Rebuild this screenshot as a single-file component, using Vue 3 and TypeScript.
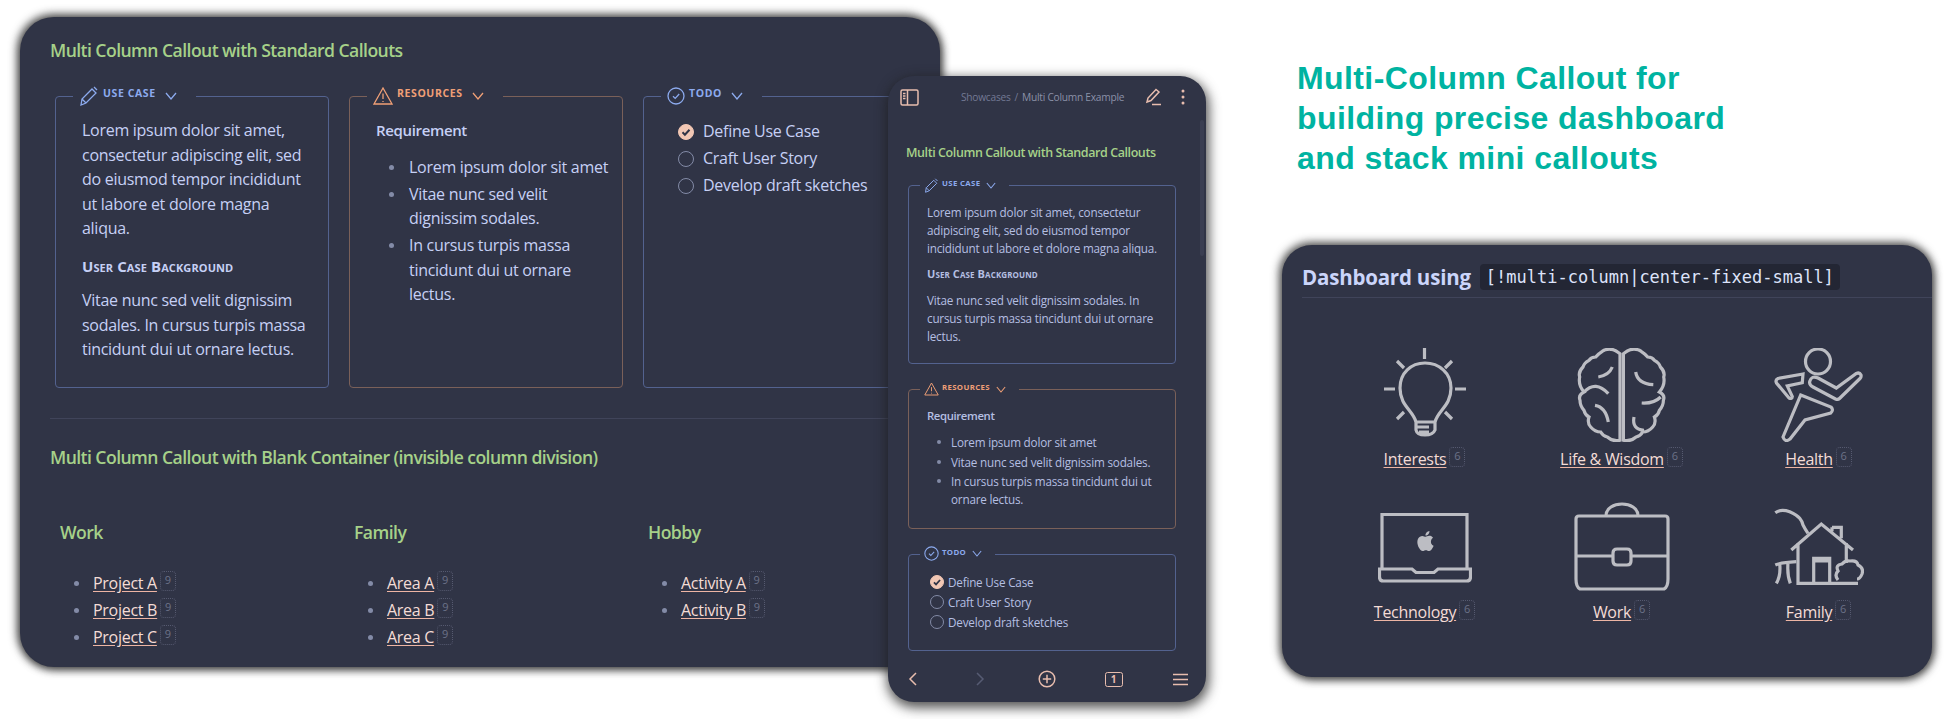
<script setup lang="ts">
interface Tile { label: string; icon: string }
const columns = [
  { name: 'Work', items: ['Project A', 'Project B', 'Project C'] },
  { name: 'Family', items: ['Area A', 'Area B', 'Area C'] },
  { name: 'Hobby', items: ['Activity A', 'Activity B'] },
]
const todos = [
  { text: 'Define Use Case', done: true },
  { text: 'Craft User Story', done: false },
  { text: 'Develop draft sketches', done: false },
]
const tiles: Tile[] = [
  { label: 'Interests', icon: 'bulb' },
  { label: 'Life & Wisdom', icon: 'brain' },
  { label: 'Health', icon: 'run' },
  { label: 'Technology', icon: 'laptop' },
  { label: 'Work', icon: 'case' },
  { label: 'Family', icon: 'house' },
]
</script>

<template>
  <div class="canvas">
    <section class="window main">
      <h2 class="green-title">Multi Column Callout with Standard Callouts</h2>
      <div class="callouts">
        <div class="callout blue">
          <div class="c-title">
            <svg class="ic" width="20" height="20" viewBox="0 0 20 20"><path d="M2 19l1-6L13 3l4 4L7 17zM3 13l4 4M15 1l3 3" /></svg>
            <span>USE CASE</span>
            <svg class="chev" width="12" height="8" viewBox="0 0 12 8"><path d="M1 1l5 6 5-6" /></svg>
          </div>
          <p>Lorem ipsum dolor sit amet, consectetur adipiscing elit, sed do eiusmod tempor incididunt ut labore et dolore magna aliqua.</p>
          <h6>User Case Background</h6>
          <p>Vitae nunc sed velit dignissim sodales. In cursus turpis massa tincidunt dui ut ornare lectus.</p>
        </div>
        <div class="callout peach">
          <div class="c-title">
            <svg class="ic" width="20" height="18" viewBox="0 0 20 18"><path d="M10 1L1 17h18zM10 6.500v5.500M10 14v1" /></svg>
            <span>RESOURCES</span>
            <svg class="chev" width="12" height="8" viewBox="0 0 12 8"><path d="M1 1l5 6 5-6" /></svg>
          </div>
          <p class="req">Requirement</p>
          <ul>
            <li>Lorem ipsum dolor sit amet</li>
            <li>Vitae nunc sed velit dignissim sodales.</li>
            <li>In cursus turpis massa tincidunt dui ut ornare lectus.</li>
          </ul>
        </div>
        <div class="callout blue">
          <div class="c-title">
            <svg class="ic" width="18" height="18" viewBox="0 0 18 18"><circle cx="9" cy="9" r="8" /><path d="M6 9.200l2.200 2.200L12.200 7" /></svg>
            <span>TODO</span>
            <svg class="chev" width="12" height="8" viewBox="0 0 12 8"><path d="M1 1l5 6 5-6" /></svg>
          </div>
          <div class="todo">
            <div v-for="t in todos" :key="t.text" class="todo-row">
              <span class="box" :class="{ done: t.done }">
                <svg v-if="t.done" width="16" height="16" viewBox="0 0 16 16"><path d="M4.500 8.300l2.400 2.400 4.600-5" /></svg>
              </span>
              {{ t.text }}
            </div>
          </div>
        </div>
      </div>
      <hr class="rule" />
      <h2 class="green-title second">Multi Column Callout with Blank Container (invisible column division)</h2>
      <div class="blank-cols">
        <div v-for="c in columns" :key="c.name" class="blank-col">
          <h3 class="green-title">{{ c.name }}</h3>
          <ul class="links">
            <li v-for="i in c.items" :key="i"><a>{{ i }}</a><span class="badge">9</span></li>
          </ul>
        </div>
      </div>
    </section>

    <section class="window phone">
      <header class="p-top">
        <svg class="tool" width="19" height="17" viewBox="0 0 19 17"><rect x="1" y="1" width="17" height="15" rx="1.500" /><path d="M7.500 1v15M3 4.500h2.500M3 7h2.500M3 9.500h2.500" /></svg>
        <div class="crumb"><span>Showcases</span><i>/</i><b>Multi Column Example</b></div>
        <svg class="tool pen" width="18" height="18" viewBox="0 0 18 18"><path d="M2 14l1-4L11 1.500l3 2.500-8 8.500zM7 16.500h9" /></svg>
        <svg class="dots" width="4" height="16" viewBox="0 0 4 16"><circle cx="2" cy="2" r="1.500" /><circle cx="2" cy="8" r="1.500" /><circle cx="2" cy="14" r="1.500" /></svg>
      </header>
      <div class="p-body">
        <h2 class="green-title">Multi Column Callout with Standard Callouts</h2>
        <div class="callout blue">
          <div class="c-title">
            <svg class="ic" width="15" height="15" viewBox="0 0 20 20"><path d="M2 19l1-6L13 3l4 4L7 17zM3 13l4 4M15 1l3 3" /></svg>
            <span>USE CASE</span>
            <svg class="chev" width="10" height="7" viewBox="0 0 12 8"><path d="M1 1l5 6 5-6" /></svg>
          </div>
          <p>Lorem ipsum dolor sit amet, consectetur adipiscing elit, sed do eiusmod tempor incididunt ut labore et dolore magna aliqua.</p>
          <h6>User Case Background</h6>
          <p>Vitae nunc sed velit dignissim sodales. In cursus turpis massa tincidunt dui ut ornare lectus.</p>
        </div>
        <div class="callout peach">
          <div class="c-title">
            <svg class="ic" width="15" height="14" viewBox="0 0 20 18"><path d="M10 1L1 17h18zM10 6.500v5.500M10 14v1" /></svg>
            <span>RESOURCES</span>
            <svg class="chev" width="10" height="7" viewBox="0 0 12 8"><path d="M1 1l5 6 5-6" /></svg>
          </div>
          <p class="req">Requirement</p>
          <ul>
            <li>Lorem ipsum dolor sit amet</li>
            <li>Vitae nunc sed velit dignissim sodales.</li>
            <li>In cursus turpis massa tincidunt dui ut ornare lectus.</li>
          </ul>
        </div>
        <div class="callout blue">
          <div class="c-title">
            <svg class="ic" width="15" height="15" viewBox="0 0 18 18"><circle cx="9" cy="9" r="8" /><path d="M6 9.200l2.200 2.200L12.200 7" /></svg>
            <span>TODO</span>
            <svg class="chev" width="10" height="7" viewBox="0 0 12 8"><path d="M1 1l5 6 5-6" /></svg>
          </div>
          <div class="todo">
            <div v-for="t in todos" :key="t.text" class="todo-row">
              <span class="box" :class="{ done: t.done }">
                <svg v-if="t.done" width="14" height="14" viewBox="0 0 16 16"><path d="M4.500 8.300l2.400 2.400 4.600-5" /></svg>
              </span>
              {{ t.text }}
            </div>
          </div>
        </div>
      </div>
      <div class="scroll-thumb"></div>
      <footer class="p-bottom">
        <svg class="tool" width="10" height="14" viewBox="0 0 10 14"><path d="M8 1L2 7l6 6" /></svg>
        <svg class="tool off" width="10" height="14" viewBox="0 0 10 14"><path d="M2 1l6 6-6 6" /></svg>
        <svg class="tool" width="18" height="18" viewBox="0 0 18 18"><circle cx="9" cy="9" r="7.800" /><path d="M9 4.800v8.400M4.800 9h8.400" /></svg>
        <span class="tabs">1</span>
        <svg class="tool" width="15" height="13" viewBox="0 0 15 13"><path d="M0 1.500h15M0 6.500h15M0 11.500h15" /></svg>
      </footer>
    </section>

    <h1 class="headline">Multi-Column Callout for<br />building precise dashboard<br />and stack mini callouts</h1>

    <section class="window dash">
      <div class="d-head">
        <strong>Dashboard using</strong>
        <code>[!multi-column|center-fixed-small]</code>
      </div>
      <hr class="rule" />
      <div class="tiles">
        <div v-for="t in tiles" :key="t.label" class="tile">
          <svg v-if="t.icon === 'bulb'" class="art" width="88" height="94" viewBox="0 0 88 94">
            <path d="M43.500 0v11M3 41h11M74 41h11M16 13l7 7M71 13l-7 7M16 71l7-7M71 71l-7-7" />
            <path d="M35 74C32 62 19 58 19 40 19 25 30 15 44 15s26 10 26 25c0 18-13 22-16 34zM35 74v8q1 5 9 5t10-5v-8M36 79h12M38 84h10" />
          </svg>
          <svg v-else-if="t.icon === 'brain'" class="art" width="90" height="94" viewBox="0 0 90 94">
            <path d="M43 5.700Q37 1 33.700 1.300 28 1 25.300 3.300 21 6 18.700 9 14 9 12 12.300 7 15 6 19 1 24 2.700 29 1 37 7 44 1 47 3 52.300 3 58 7 62.300 8 67 12 69 10 75 13.700 79 18 84 23.700 84 26 88 30.300 89 36 94 43 92.300z" />
            <path d="M46.400 5.700Q52.400 1 55.700 1.300 61.400 1 64.100 3.300 68.400 6 70.700 9 75.400 9 77.400 12.300 82.400 15 83.400 19 88.400 24 86.700 29 88.400 37 82.400 44 88.400 47 86.400 52.300 86.400 58 82.400 62.300 81.400 67 77.400 69 79.400 75 75.700 79 71.400 84 65.700 84 63.400 88 59.100 89 53.400 94 46.400 92.300z" />
            <path d="M21.300 29Q32 27.300 35.300 19M7 44Q18.700 32 31.300 45.700M18 57.300Q28.700 59 31.300 74M58.700 24Q60.300 35.700 76.300 36.700M64.700 55Q77 55.700 83.700 49M57 69Q54.700 81.300 67 82.300" />
          </svg>
          <svg v-else-if="t.icon === 'run'" class="art" width="90" height="94" viewBox="0 0 90 94">
            <circle cx="44" cy="13.500" r="12.500" />
            <path d="M44 30L62.300 40 82.300 25.500Q85.500 24 87 27 87.500 29 86 30.500L65.500 50.500Q64 52 61.500 51L39 39Q35 37 35.700 33.500 37.500 27 44 30zM29 26L4 30.500Q1 32 2.500 35L15 50Q18 51.500 18.300 48.500L13.300 38 28.300 34.700zM26.700 47L57 59Q60 62 56.700 65L31 72 16 91Q11 95 9 89z" />
          </svg>
          <svg v-else-if="t.icon === 'laptop'" class="art" width="94" height="70" viewBox="0 0 94 70">
            <path d="M4 56V1.500h85V56M1.500 56H34l4 3.500h18l4-3.500h32.500v8q0 4-4 4H5.500q-4 0-4-4z" />
            <g transform="translate(35.500 16)"><path class="solid" d="M18.710 19.500c-.83 1.240-1.710 2.450-3.050 2.470-1.340.03-1.770-.79-3.290-.79-1.530 0-2 .77-3.270.82-1.310.05-2.300-1.320-3.140-2.530C4.250 17 2.940 12.450 4.700 9.390c.87-1.520 2.430-2.480 4.120-2.510 1.280-.02 2.500.87 3.290.87.780 0 2.260-1.070 3.810-.91.650.03 2.470.26 3.640 1.980-.09.06-2.170 1.280-2.150 3.810.03 3.020 2.650 4.030 2.680 4.040-.03.07-.42 1.440-1.380 2.830M13 3.500c.73-.83 1.940-1.460 2.940-1.500.13 1.170-.34 2.350-1.040 3.190-.69.85-1.830 1.510-2.950 1.420-.15-1.150.41-2.350 1.050-3.110z" /></g>
          </svg>
          <svg v-else-if="t.icon === 'case'" class="art" width="96" height="90" viewBox="0 0 96 90">
            <path d="M32 13C32 -3 64 -3 64 13M5 13h86q3 0 3 3v60q0 8-4 10H6q-4-2-4-10V16q0-3 3-3zM2 53h37M57 53h37M43 46h10q4 0 4 4v8q0 4-4 4H43q-4 0-4-4v-8q0-4 4-4z" />
          </svg>
          <svg v-else class="art" width="90" height="80" viewBox="0 0 90 80">
            <path d="M17.300 42L47.300 16 79 42M24 35v40.300h60M72.300 35v20M39.700 75.300V50.300h16v25M39.700 53h16M58 19.300h9.300v11M58 19.300v4" />
            <path d="M1.300 4.700Q7 .5 15.700 3.700 23 7 25.700 10.300 28 13 29 17 31 21 34 25.300M1.300 57Q7 54.500 22.300 53.700M5.700 55.300Q7 68 2.300 75.300M14 54.700Q13 67 16.300 75.300" />
            <path d="M64 72Q60 67 64 63 61 57 68 56 71 52 76 53 83 52 84 57 90 60 88 66 86 71 83 71" />
          </svg>
          <div class="tile-label"><a>{{ t.label }}</a><span class="badge">6</span></div>
        </div>
      </div>
    </section>
  </div>
</template>

<style scoped>
.canvas { position: relative; width: 1948px; height: 719px; background: #fff; overflow: hidden; font-family: "Open Sans", "Noto Sans", sans-serif; color: #c6d0f5; }
.window { position: absolute; box-sizing: border-box; background: #303446; overflow: hidden; }
.main { left: 20px; top: 17px; width: 920px; height: 650px; border-radius: 34px; padding: 20px 30px; box-shadow: -1px -1px 8px 2px rgba(30,30,30,.75), 2px 3px 8px rgba(30,30,30,.6); }
.green-title { margin: 0; font-size: 17.600px; line-height: 26px; font-weight: 600; color: #a6d189; letter-spacing: -.56px; }
.callouts { display: grid; grid-template-columns: repeat(3, 274px); gap: 20px; margin: 33px 0 0 5px; }
.callout { position: relative; box-sizing: border-box; height: 292px; border: 1px solid; border-radius: 4px; padding: 21px 18px 0 26px; font-size: 16px; line-height: 24.500px; letter-spacing: -.28px; }
.callout.blue { border-color: #53628f; }
.callout.peach { border-color: #7a6059; padding-right: 11px; }
.callout.blue .c-title { color: #8caaee; }
.callout.peach .c-title { color: #ef9f76; }
.c-title { position: absolute; left: 17px; top: -11px; display: flex; align-items: center; height: 20px; padding: 0 19px 0 6px; background: #303446; font-size: 10.500px; line-height: 12px; font-weight: 700; letter-spacing: .6px; }
.c-title span { position: relative; top: -3px; margin: 0 9px 0 4px; }
.c-title svg { fill: none; stroke: currentColor; stroke-width: 1.300; }
.callout p { margin: 0; }
.callout h6 { margin: 15.500px 0 12px; font-size: 15px; line-height: 20px; font-weight: 700; font-variant: small-caps; letter-spacing: .1px; }
.callout .req { font-size: 15px; font-weight: 600; letter-spacing: -.35px; }
.callout ul { margin: 12px 0 0; padding: 0 0 0 9px; list-style: none; }
.callout li { position: relative; margin-bottom: 2.500px; padding-left: 23px; margin-left: 1px; }
.callout li::before, .links li::before { content: ""; position: absolute; left: 3px; top: 10px; width: 5px; height: 5px; border-radius: 50%; background: #838ba7; }
.todo { margin-left: 8px; }
.todo-row { display: flex; align-items: center; gap: 9px; height: 27px; }
.box { box-sizing: border-box; width: 16px; height: 16px; border: 1px solid #838ba7; border-radius: 50%; flex: none; display: flex; align-items: center; justify-content: center; }
.box.done { background: #f2c7b4; border-color: #f2c7b4; }
.box svg { fill: none; stroke: #303446; stroke-width: 2; flex: none; }
.rule { border: 0; height: 1px; background: #40445a; margin: 30px 0 0; }
.second { margin-top: 25px; }
.blank-cols { display: grid; grid-template-columns: repeat(3, 294px); margin: 49px 0 0 10px; }
.links { margin: 25px 0 0; padding: 0; list-style: none; font-size: 16px; letter-spacing: -.28px; }
.links li { position: relative; height: 27px; line-height: 27px; padding-left: 33px; }
.links li::before { left: 14px; top: 11px; }
a { color: #f4dcd6; text-decoration: underline; text-decoration-color: #eeb5a4; text-underline-offset: 2px; }
.badge { display: inline-block; box-sizing: border-box; width: 16px; height: 20px; margin-left: 3px; border: 1px dotted #565a70; border-radius: 4px; font-size: 11px; line-height: 16px; text-align: center; color: #6c7288; letter-spacing: 0; vertical-align: 5px; }

.phone { left: 888px; top: 76px; width: 318px; height: 626px; border-radius: 26px; box-shadow: 1px 4px 12px 2px rgba(30,30,30,.75); display: flex; flex-direction: column; }
.p-top { flex: none; display: flex; align-items: center; height: 38px; padding: 2px 21px 0 12px; }
.tool { fill: none; stroke: #e8bdae; stroke-width: 1.500; }
.tool.off { stroke: #565b73; }
.dots { fill: #e8bdae; margin-left: 18px; }
.crumb { flex: 1; margin-left: 42px; font-size: 10.200px; color: #737994; letter-spacing: -.25px; display: flex; gap: 4px; }
.crumb b { font-weight: 400; color: #8b91a8; }
.crumb i { font-style: normal; }
.p-body { flex: 1; padding: 24px 30px 0 20px; }
.phone .green-title { font-size: 12.500px; line-height: 26px; font-weight: 600; letter-spacing: -.42px; margin-left: -2px; }
.phone .callout { height: auto; margin-top: 25px; padding: 17px 12px 18px 18px; font-size: 11.700px; line-height: 18px; letter-spacing: -.2px; color: #b5bfe2; }
.phone .green-title + .callout { margin-top: 19px; }
.phone .c-title { left: 11px; top: -9px; height: 16px; font-size: 7.800px; letter-spacing: .35px; padding: 0 13px 0 4px; }
.phone .c-title span { margin: 0 6px 0 3px; top: -2px; }
.phone h6 { margin: 8px 0 8px; font-size: 11px; line-height: 18px; }
.phone .req { font-size: 11.300px; margin-left: 0; margin-bottom: 0; }
.phone ul { margin-top: 8px; padding-left: 1px; }
.phone li { margin: 0 0 1.500px; padding-left: 23px; margin-left: 0; }
.phone li::before { left: 9px; top: 7px; width: 4px; height: 4px; }
.phone .todo { margin-left: 3px; }
.phone .todo-row { height: 20px; gap: 4px; }
.phone .box { width: 14px; height: 14px; }
.scroll-thumb { position: absolute; right: 2px; top: 44px; width: 4px; height: 136px; border-radius: 2px; background: #3a3e52; }
.p-bottom { flex: none; height: 38px; display: grid; grid-template-columns: repeat(5, 67px); justify-items: center; align-items: center; margin-left: -9px; padding-bottom: 4px; }
.tabs { box-sizing: border-box; width: 18px; height: 15px; border: 1.500px solid #e8bdae; border-radius: 2.500px; color: #e8bdae; font-size: 10px; font-weight: 700; line-height: 12px; text-align: center; }

.headline { position: absolute; left: 1297px; top: 58px; margin: 0; font: 700 32px/40px "Liberation Sans", Arial, sans-serif; letter-spacing: .4px; color: #00b3a1; }

.dash { left: 1282px; top: 245px; width: 650px; height: 432px; border-radius: 30px; padding: 18px 0 0 20px; box-shadow: -1px -1px 8px 2px rgba(30,30,30,.7), 2px 3px 8px rgba(30,30,30,.6); }
.d-head { display: flex; align-items: center; height: 27px; gap: 9px; }
.d-head strong { font-size: 20.500px; font-weight: 700; letter-spacing: -.2px; color: #cbd5fa; }
.d-head code { background: #232634; border-radius: 4px; padding: 0 6px; height: 26px; font: 400 17px/26px "DejaVu Sans Mono", monospace; color: #dde3fa; white-space: nowrap; }
.dash .rule { margin: 7px 0 0; }
.tiles { display: grid; grid-template-columns: repeat(3, 197px); margin: 50px 0 0 24px; }
.tile { height: 153px; display: flex; flex-direction: column; align-items: center; }
.art { fill: none; stroke: #bcbdc3; stroke-width: 3.200; height: 94px; flex: none; }
.art .solid { fill: #bcbdc3; stroke: none; }
.tile-label { font-size: 16px; letter-spacing: -.28px; line-height: 27px; margin-top: 4px; white-space: nowrap; }
</style>

<style>
html, body { margin: 0; background: #fff; }
</style>
